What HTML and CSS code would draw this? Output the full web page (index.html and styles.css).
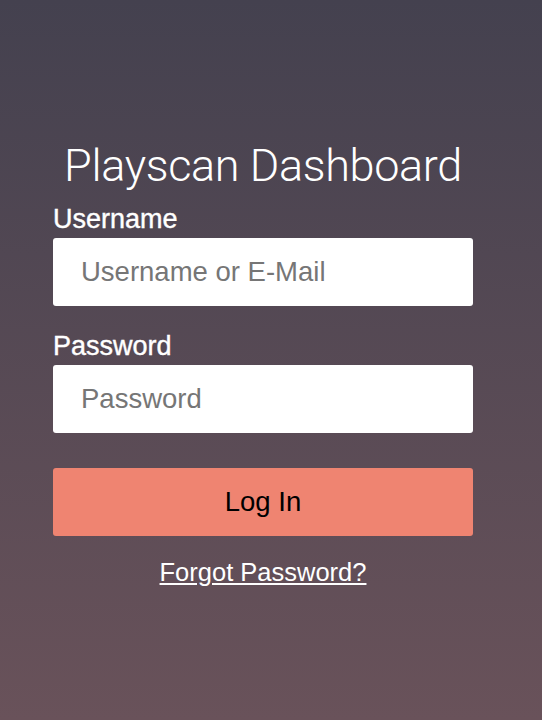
FILE: index.html
```html
<!DOCTYPE html>
<html>
<head>
<meta charset="utf-8">
<link rel="stylesheet" href="styles.css">
</head>
<body>
<main class="page">
  <form class="login">
    <h1 class="title">Playscan Dashboard</h1>
    <label class="label" for="user">Username</label>
    <input class="field" id="user" type="text" placeholder="Username or E-Mail">
    <label class="label label-pw" for="pw">Password</label>
    <input class="field" id="pw" type="password" placeholder="Password">
    <button class="btn" type="button">Log In</button>
    <a class="forgot" href="#">Forgot Password?</a>
  </form>
</main>
</body>
</html>
```
FILE: styles.css
```css
html, body {
  margin: 0;
  padding: 0;
  height: 100%;
}
body {
  background: linear-gradient(to bottom, #44414f 0%, #69525a 100%);
  font-family: "Liberation Sans", Arial, sans-serif;
  color: #fff;
}
.page {
  padding: 140px 53px 0 53px;
}
.login {
  display: flex;
  flex-direction: column;
  width: 420px;
}
.title {
  margin: 0;
  font-family: Roboto, "Liberation Sans", sans-serif;
  font-weight: 300;
  font-size: 45px;
  line-height: 52px;
  text-align: center;
  letter-spacing: -0.35px;
}
.label {
  font-size: 27px;
  line-height: 30px;
  margin-top: 12px;
  margin-bottom: 4px;
  -webkit-text-stroke: 0.4px #fff;
}
.label-pw {
  margin-top: 25px;
}
.field {
  box-sizing: border-box;
  height: 68px;
  border: none;
  border-radius: 3px;
  background: #fff;
  padding: 0 28px;
  font-family: "Liberation Sans", Arial, sans-serif;
  font-size: 27.5px;
  color: #333;
  outline: none;
}
.field::placeholder {
  color: #767676;
}
.btn {
  margin-top: 35px;
  height: 68px;
  border: none;
  border-radius: 3px;
  background: #ef8471;
  font-family: "Liberation Sans", Arial, sans-serif;
  font-size: 27.5px;
  color: #000;
}
.forgot {
  margin-top: 21px;
  align-self: center;
  color: #fff;
  font-size: 25.5px;
  line-height: 30px;
  text-decoration: underline;
}
```
